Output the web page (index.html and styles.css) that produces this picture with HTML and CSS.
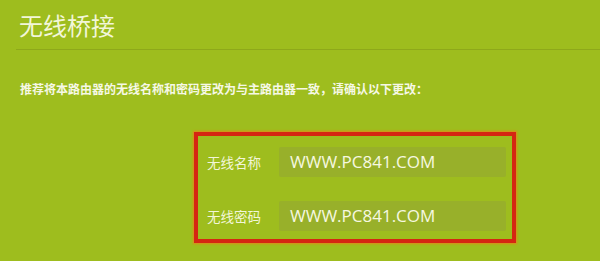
FILE: index.html
```html
<!DOCTYPE html>
<html lang="zh-CN">
<head>
<meta charset="utf-8">
<link rel="stylesheet" href="styles.css">
</head>
<body>
<div class="page">
  <header class="header">
    <h1 class="title">无线桥接</h1>
  </header>
  <p class="notice">推荐将本路由器的无线名称和密码更改为与主路由器一致，请确认以下更改：</p>
  <div class="box">
    <div class="row">
      <span class="label">无线名称</span>
      <div class="field">WWW.PC841.COM</div>
    </div>
    <div class="row">
      <span class="label">无线密码</span>
      <div class="field">WWW.PC841.COM</div>
    </div>
  </div>
</div>
</body>
</html>
```
FILE: styles.css
```css
html, body {
  margin: 0;
  padding: 0;
  background: #9ebd1e;
}
.page {
  width: 600px;
  height: 261px;
  overflow: hidden;
  font-family: "Noto Sans CJK SC", "Noto Sans", sans-serif;
  color: #f4f7dc;
}
.header {
  margin-left: 16px;
  border-bottom: 1px solid #8ea81a;
  height: 50px;
  box-sizing: border-box;
}
.title {
  margin: 0;
  padding: 10px 0 0 3px;
  font-size: 24px;
  font-weight: normal;
  line-height: 30px;
  color: #f2f6d8;
}
.notice {
  margin: 29px 0 0 20px;
  font-size: 12px;
  font-weight: bold;
  line-height: 20px;
  color: #f6f8e6;
}
.box {
  margin: 33px 0 0 194px;
  width: 299px;
  border: 4px solid #d52612;
  box-shadow: 0 0 2px 1px #e08a18;
  padding: 11px 6px 8px 9px;
  display: flex;
  flex-direction: column;
  gap: 24px;
}
.row {
  display: flex;
  align-items: center;
}
.label {
  width: 72px;
  font-size: 13.5px;
  color: #f2f6d8;
}
.field {
  flex: 1;
  height: 30px;
  line-height: 30px;
  background: #98b02a;
  border-radius: 2px;
  padding-left: 11px;
  font-family: "Open Sans", "Noto Sans", sans-serif;
  font-size: 17px;
  color: #f6f8e0;
}
```
